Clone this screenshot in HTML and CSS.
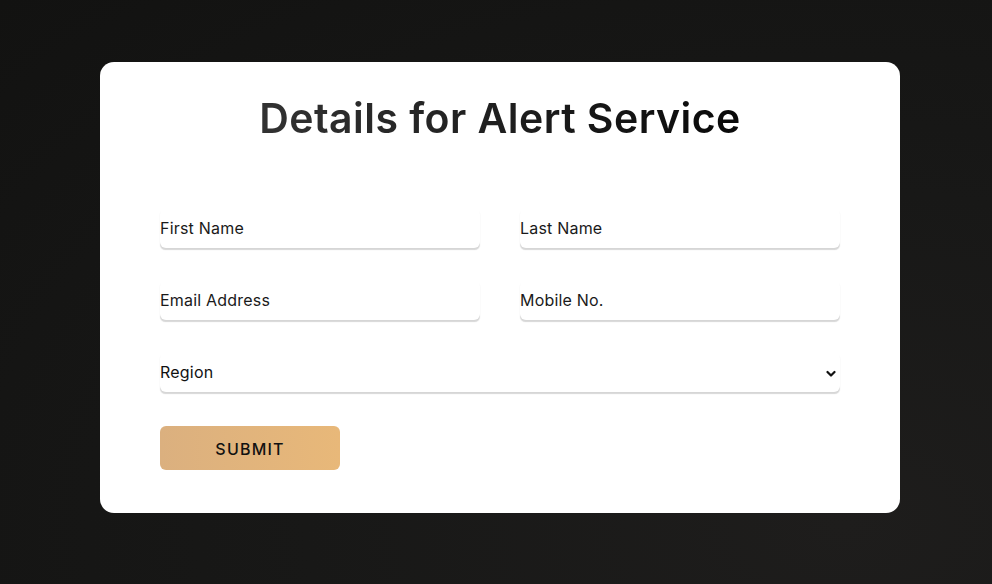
FILE: index.html
```html
<!DOCTYPE html>
<html>
<head>
<meta charset="utf-8">
<link rel="stylesheet" href="styles.css">
</head>
<body>
<div class="page">
  <form class="card">
    <h1 class="title">Details for Alert Service</h1>
    <div class="grid">
      <div class="field"><input class="input" type="text" placeholder="First Name"></div>
      <div class="field"><input class="input" type="text" placeholder="Last Name"></div>
      <div class="field"><input class="input" type="text" placeholder="Email Address"></div>
      <div class="field"><input class="input" type="text" placeholder="Mobile No."></div>
      <div class="field full">
        <div class="select">
          <span>Region</span>
          <svg class="chev" width="10" height="8" viewBox="0 0 10 8"><path d="M1.5 2 L5 5.5 L8.5 2" fill="none" stroke="#111" stroke-width="2.2" stroke-linecap="round" stroke-linejoin="round"/></svg>
        </div>
      </div>
    </div>
    <button class="btn" type="button">SUBMIT</button>
  </form>
</div>
</body>
</html>
```

FILE: styles.css
```css
* { box-sizing: border-box; }
html, body { margin: 0; height: 100%; }
body {
  font-family: Inter, "Noto Sans", sans-serif;
  background: radial-gradient(ellipse at 85% 90%, #1e1d1c 0%, #181817 45%, #121211 100%);
}
.page {
  width: 992px;
  height: 584px;
  padding: 62px 0 0 100px;
  display: flex;
  align-items: flex-start;
}
.card {
  width: 800px;
  height: 451px;
  background: #fff;
  border-radius: 14px;
  padding: 30px 60px 0;
}
.title {
  margin: 0;
  text-align: center;
  font-size: 41px;
  font-weight: 600;
  line-height: 52px;
  letter-spacing: 0.45px;
  background: linear-gradient(90deg, #3a3a3a 0%, #1c1c1c 55%, #000 100%);
  -webkit-background-clip: text;
  background-clip: text;
  color: transparent;
}
.grid {
  margin-top: 64px;
  display: grid;
  grid-template-columns: 320px 320px;
  column-gap: 40px;
  row-gap: 32px;
}
.full { grid-column: 1 / 3; }
.input, .select {
  width: 100%;
  height: 40px;
  border: none;
  border-radius: 6px;
  background: #fff;
  box-shadow: 0 2px 1px -0.5px rgba(0,0,0,0.16);
  font-family: Inter, "Noto Sans", sans-serif;
  font-size: 16px;
  font-weight: 400;
  letter-spacing: 0.2px;
  color: #111;
  padding: 0;
  outline: none;
}
.input::placeholder { color: #1a1a1a; opacity: 1; }
.select {
  display: flex;
  align-items: center;
  justify-content: space-between;
  padding-right: 4px;
}
.chev { margin-top: 4px; }
.btn {
  margin-top: 34px;
  width: 180px;
  height: 44px;
  border: none;
  border-radius: 6px;
  background: linear-gradient(90deg, #dbb07f 0%, #e8b879 100%);
  font-family: Inter, "Noto Sans", sans-serif;
  font-size: 16px;
  font-weight: 500;
  letter-spacing: 1.2px;
  color: #111;
  padding: 2px 0 0;
}
```
